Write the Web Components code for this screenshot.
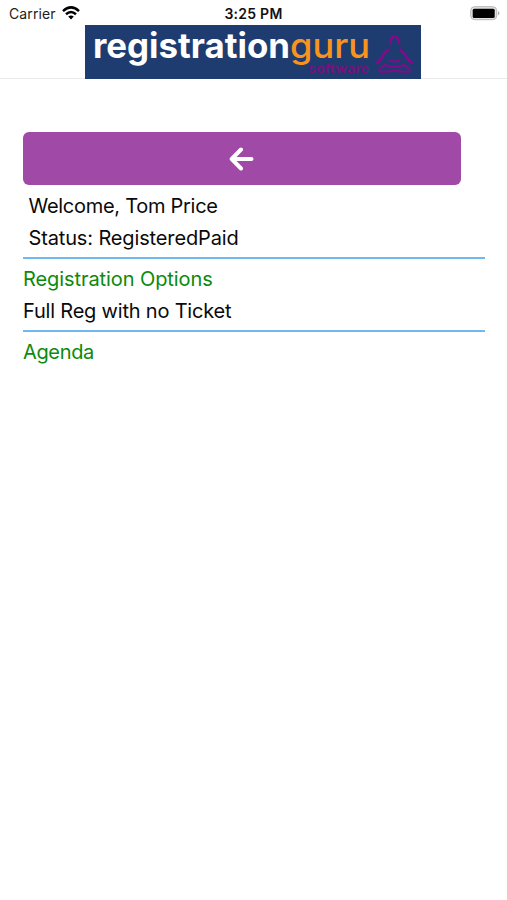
<!DOCTYPE html>
<html lang="en">
<head>
<meta charset="utf-8">
<title>registrationguru</title>
<style>
  body {
    margin: 0;
    background: #fff;
    color: #0a0a0a;
    font-family: Inter, "Liberation Sans", sans-serif;
  }
</style>
</head>
<body>
<guru-app></guru-app>

<script>
class StatusBar extends HTMLElement {
  constructor() {
    super()
    this.attachShadow({ mode: 'open' }).innerHTML = `
      <style>
        :host {
          display: grid;
          grid-template-columns: 1fr auto 1fr;
          align-items: center;
          height: 25px;
          box-sizing: border-box;
          padding: 2px 6px 0 9px;
          font-size: 14px;
          line-height: 23px;
          color: #222;
        }
        .carrier { display: flex; align-items: center; gap: 6px; letter-spacing: 0.1px; }
        .time { font-weight: 600; color: #111; letter-spacing: 0.25px; margin-right: 3px; }
        .battery { justify-self: end; }
        svg { display: block; margin-top: -1px; }
      </style>
      <div class="carrier"><slot name="carrier"></slot>
        <svg width="18" height="14" viewBox="0 0 18 14" fill="none" stroke="#000" stroke-width="2.5">
          <path d="M1 5.1Q9-2.3 17 5.1M4 8.3Q9 3.8 14 8.3"/>
          <path d="M6.2 10.6Q9 8.2 11.8 10.6L9 13.5Z" fill="#000" stroke="none"/>
        </svg>
      </div>
      <div class="time"><slot name="time"></slot></div>
      <svg class="battery" width="31" height="15" viewBox="0 0 31 15">
        <rect x=".7" y=".7" width="26" height="13" rx="4" fill="#e2e2e2" stroke="#b5b5b5"/>
        <rect x="2.7" y="2.7" width="22" height="9.2" rx="1.5" fill="#000"/>
        <path d="M28.2 5Q30.5 7.2 28.2 9.6Z" fill="#999"/>
      </svg>`
  }
}
customElements.define('status-bar', StatusBar)

class GuruLogo extends HTMLElement {
  constructor() {
    super()
    this.attachShadow({ mode: 'open' }).innerHTML = `
      <style>
        :host { display: block; width: 336px; height: 54px; background: #1e3c70; }
        svg { display: block; overflow: visible; }
        text { font-family: Inter, sans-serif; font-variant-ligatures: none; }
      </style>
      <svg width="336" height="54" viewBox="0 0 336 54">
        <text x="8" y="33" font-size="34.5" font-weight="700" fill="#fff" textLength="197" lengthAdjust="spacingAndGlyphs">registration</text>
        <text x="205" y="33" font-size="34.5" font-weight="500" fill="#f7941d" textLength="80" lengthAdjust="spacingAndGlyphs">guru</text>
        <text x="223" y="47.5" font-size="12.5" font-weight="700" fill="#75127f" textLength="61" lengthAdjust="spacingAndGlyphs">software</text>
        <g fill="none" stroke="#810b8b" stroke-width="2.5" stroke-linecap="round" stroke-linejoin="round">
          <path d="M305 18.5Q306 12 309.5 11Q313 12 314.5 18.5"/>
          <path d="M303.5 24.5Q298.500 28 297 33L292 38M315.500 24.5L317 27Q320.500 29 322 33L327 38"/>
          <path d="M304.500 35.5Q309.5 37.5 314.5 35.5" stroke-width="2"/>
          <path d="M300 40Q292.5 44 294.500 46.5Q302 47.5 309.5 45.5Q317 47.5 324.5 46.5Q326.5 44 319 40Q309.5 44 300 40Z" stroke-width="2"/>
        </g>
      </svg>`
  }
}
customElements.define('guru-logo', GuruLogo)

class AppHeader extends HTMLElement {
  constructor() {
    super()
    this.attachShadow({ mode: 'open' }).innerHTML = `
      <style>
        :host {
          display: flex;
          justify-content: center;
          height: 54px;
          padding-right: 1px;
          background: linear-gradient(#e9e9eb, #e9e9eb) 0 53px / 100% 1px no-repeat;
        }
      </style>
      <slot></slot>`
  }
}
customElements.define('app-header', AppHeader)

class BackButton extends HTMLElement {
  constructor() {
    super()
    this.attachShadow({ mode: 'open' }).innerHTML = `
      <style>
        :host { display: block; width: 438px; height: 53px; margin-bottom: 1px; }
        button {
          display: flex;
          align-items: center;
          justify-content: center;
          width: 100%;
          height: 100%;
          padding: 0;
          border: 0;
          border-radius: 6px;
          background: #a149a7;
        }
      </style>
      <button aria-label="Back">
        <svg width="26" height="26" viewBox="0 0 26 26" fill="none" stroke="#fff" stroke-width="4" stroke-linecap="round" stroke-linejoin="round">
          <path d="M12 3.5L2.7 13L12 22.5M3.5 13H22.5"/>
        </svg>
      </button>`
  }
}
customElements.define('back-button', BackButton)

class InfoSection extends HTMLElement {
  constructor() {
    super()
    this.attachShadow({ mode: 'open' }).innerHTML = `
      <style>
        :host {
          display: block;
          padding: 4px 0 3px;
          font-size: 20px;
          line-height: 32px;
          letter-spacing: -0.2px;
        }
        :host([ruled]) { border-top: 2px solid #70b8f0; }
        :host([inset]) { padding-left: 5.5px; }
        ::slotted(*) { display: block; margin: 0; font: inherit; white-space: nowrap; }
        ::slotted(h2) { color: #0b8a0b; }
      </style>
      <slot></slot>`
  }
}
customElements.define('info-section', InfoSection)

class GuruApp extends HTMLElement {
  constructor() {
    super()
    this.attachShadow({ mode: 'open' }).innerHTML = `
      <style>
        :host { display: block; min-height: 900px; }
        main { padding: 53px 22px 0 23px; }
        .welcome { letter-spacing: -0.28px; }
        .status { letter-spacing: -0.14px; }
        .options { letter-spacing: -0.08px; }
        .agenda { letter-spacing: -0.35px; }
      </style>
      <status-bar>
        <span slot="carrier">Carrier</span>
        <span slot="time">3:25 PM</span>
      </status-bar>
      <app-header><guru-logo></guru-logo></app-header>
      <main>
        <back-button></back-button>
        <info-section inset>
          <p class="welcome">Welcome, Tom Price</p>
          <p class="status">Status: RegisteredPaid</p>
        </info-section>
        <info-section ruled>
          <h2 class="options">Registration Options</h2>
          <p class="ticket">Full Reg with no Ticket</p>
        </info-section>
        <info-section ruled>
          <h2 class="agenda">Agenda</h2>
        </info-section>
      </main>`
  }
}
customElements.define('guru-app', GuruApp)
</script>
</body>
</html>
